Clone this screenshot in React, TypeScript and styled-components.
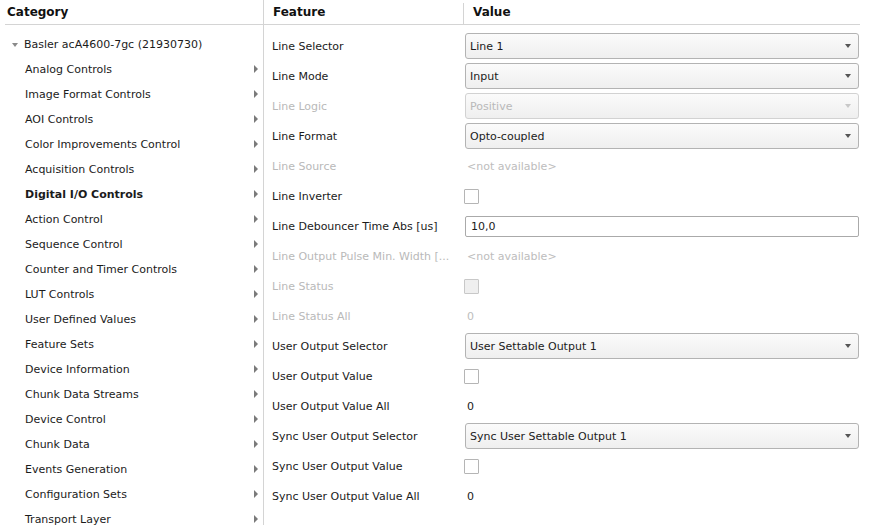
import React from 'react';
import styled, { createGlobalStyle } from 'styled-components';

const GlobalStyle = createGlobalStyle`
  html, body {
    margin: 0;
    padding: 0;
    background: #ffffff;
  }
  body {
    font-family: "DejaVu Sans", "Liberation Sans", sans-serif;
    font-size: 11px;
    color: #1b1b1b;
  }
`;

const Screen = styled.div`
  display: flex;
  width: 870px;
  height: 525px;
  overflow: hidden;
  background: #ffffff;
`;

const CategoryPanel = styled.div`
  width: 258px;
  margin-left: 5px;
  border-right: 1px solid #d4d4d4;
  display: flex;
  flex-direction: column;
  flex-shrink: 0;
`;

const HeaderRow = styled.div`
  height: 24px;
  flex-shrink: 0;
  display: flex;
  align-items: center;
  border-bottom: 1px solid #d4d4d4;
  font-weight: bold;
  font-size: 12px;
  color: #111;
`;

// header cell; the one with a divider starts 3px below the top, as in Qt
const HeaderCell = styled.div<{ $width?: number; $divider?: boolean }>`
  display: flex;
  align-items: center;
  align-self: flex-end;
  box-sizing: border-box;
  height: ${p => (p.$divider ? 21 : 24)}px;
  padding-bottom: ${p => (p.$divider ? 3 : 0)}px;
  padding-left: ${p => (p.$divider ? 9 : 9)}px;
  width: ${p => (p.$width ? `${p.$width}px` : 'auto')};
  flex: ${p => (p.$width ? '0 0 auto' : '1')};
  border-right: ${p => (p.$divider ? '1px solid #d4d4d4' : 'none')};
`;

const CategoryTitle = styled.div`
  padding-left: 2px;
  margin-top: -1px;
`;

const TreeList = styled.div`
  padding-top: 7px;
  display: flex;
  flex-direction: column;
`;

const TreeRow = styled.div<{ $bold?: boolean; $root?: boolean }>`
  height: 25px;
  flex-shrink: 0;
  display: flex;
  align-items: center;
  padding-left: ${p => (p.$root ? 7 : 20)}px;
  padding-right: 5px;
  font-weight: ${p => (p.$bold ? 'bold' : 'normal')};
  color: #1b1b1b;
  white-space: nowrap;
`;

const TreeLabel = styled.span`
  flex: 1;
`;

const Expander = styled.span`
  width: 0;
  height: 0;
  border-left: 3.5px solid transparent;
  border-right: 3.5px solid transparent;
  border-top: 4px solid #8a8a8a;
  margin-right: 6px;
  margin-top: 1px;
`;

const ChildArrow = styled.span`
  width: 0;
  height: 0;
  border-top: 4px solid transparent;
  border-bottom: 4px solid transparent;
  border-left: 4px solid #7a7a7a;
  margin-top: -2px;
`;

const FeaturePanel = styled.div`
  flex: 1;
  display: flex;
  flex-direction: column;
  padding-right: 10px;
`;

const Table = styled.div`
  padding-top: 6px;
  display: flex;
  flex-direction: column;
`;

const FeatureRow = styled.div`
  height: 30px;
  flex-shrink: 0;
  display: flex;
  align-items: center;
`;

const FeatureName = styled.div<{ $disabled?: boolean }>`
  width: 201px;
  padding-left: 8px;
  box-sizing: border-box;
  flex-shrink: 0;
  white-space: nowrap;
  color: ${p => (p.$disabled ? '#b9b9b9' : '#1b1b1b')};
`;

const ValueCell = styled.div`
  flex: 1;
  display: flex;
  align-items: center;
  padding-right: 1px;
`;

const Combo = styled.div<{ $disabled?: boolean }>`
  flex: 1;
  height: 26px;
  box-sizing: border-box;
  border: 1px solid ${p => (p.$disabled ? '#d2d2d2' : '#b3b3b3')};
  border-radius: 3px;
  background: linear-gradient(#fbfbfb, #efefef);
  display: flex;
  align-items: center;
  padding: 0 7px 0 4px;
  color: ${p => (p.$disabled ? '#b9b9b9' : '#1b1b1b')};
`;

const ComboText = styled.span`
  flex: 1;
`;

const ComboArrow = styled.span<{ $disabled?: boolean }>`
  width: 0;
  height: 0;
  border-left: 3.5px solid transparent;
  border-right: 3.5px solid transparent;
  border-top: 4px solid ${p => (p.$disabled ? '#c8c8c8' : '#555555')};
`;

const TextInput = styled.div`
  flex: 1;
  height: 21px;
  box-sizing: border-box;
  border: 1px solid #aaaaaa;
  border-radius: 2px;
  background: #ffffff;
  display: flex;
  align-items: center;
  padding-left: 5px;
  color: #1b1b1b;
`;

const Check = styled.div<{ $disabled?: boolean }>`
  width: 13px;
  height: 13px;
  border: 1px solid ${p => (p.$disabled ? '#c8c8c8' : '#b5b5b5')};
  background: ${p => (p.$disabled ? '#efefef' : '#ffffff')};
  border-radius: 1px;
  margin-left: -1px;
`;

const PlainValue = styled.span<{ $disabled?: boolean }>`
  padding-left: 2px;
  color: ${p => (p.$disabled ? '#bdbdbd' : '#1b1b1b')};
`;

type Feature =
  | { name: string; kind: 'combo'; value: string; disabled?: boolean }
  | { name: string; kind: 'text'; value: string; disabled?: boolean }
  | { name: string; kind: 'check'; disabled?: boolean }
  | { name: string; kind: 'plain'; value: string; disabled?: boolean };

const categories = [
  'Analog Controls',
  'Image Format Controls',
  'AOI Controls',
  'Color Improvements Control',
  'Acquisition Controls',
  'Digital I/O Controls',
  'Action Control',
  'Sequence Control',
  'Counter and Timer Controls',
  'LUT Controls',
  'User Defined Values',
  'Feature Sets',
  'Device Information',
  'Chunk Data Streams',
  'Device Control',
  'Chunk Data',
  'Events Generation',
  'Configuration Sets',
  'Transport Layer',
];

const features: Feature[] = [
  { name: 'Line Selector', kind: 'combo', value: 'Line 1' },
  { name: 'Line Mode', kind: 'combo', value: 'Input' },
  { name: 'Line Logic', kind: 'combo', value: 'Positive', disabled: true },
  { name: 'Line Format', kind: 'combo', value: 'Opto-coupled' },
  { name: 'Line Source', kind: 'plain', value: '<not available>', disabled: true },
  { name: 'Line Inverter', kind: 'check' },
  { name: 'Line Debouncer Time Abs [us]', kind: 'text', value: '10,0' },
  { name: 'Line Output Pulse Min. Width [...', kind: 'plain', value: '<not available>', disabled: true },
  { name: 'Line Status', kind: 'check', disabled: true },
  { name: 'Line Status All', kind: 'plain', value: '0', disabled: true },
  { name: 'User Output Selector', kind: 'combo', value: 'User Settable Output 1' },
  { name: 'User Output Value', kind: 'check' },
  { name: 'User Output Value All', kind: 'plain', value: '0' },
  { name: 'Sync User Output Selector', kind: 'combo', value: 'Sync User Settable Output 1' },
  { name: 'Sync User Output Value', kind: 'check' },
  { name: 'Sync User Output Value All', kind: 'plain', value: '0' },
];

const renderValue = (f: Feature) => {
  switch (f.kind) {
    case 'combo':
      return (
        <Combo $disabled={f.disabled}>
          <ComboText>{f.value}</ComboText>
          <ComboArrow $disabled={f.disabled} />
        </Combo>
      );
    case 'text':
      return <TextInput>{f.value}</TextInput>;
    case 'check':
      return <Check $disabled={f.disabled} />;
    default:
      return <PlainValue $disabled={f.disabled}>{f.value}</PlainValue>;
  }
};

export default function App() {
  return (
    <>
      <GlobalStyle />
      <Screen>
        <CategoryPanel>
          <HeaderRow>
            <CategoryTitle>Category</CategoryTitle>
          </HeaderRow>
          <TreeList>
            <TreeRow $root>
              <Expander />
              <TreeLabel>Basler acA4600-7gc (21930730)</TreeLabel>
            </TreeRow>
            {categories.map(c => (
              <TreeRow key={c} $bold={c === 'Digital I/O Controls'}>
                <TreeLabel>{c}</TreeLabel>
                <ChildArrow />
              </TreeRow>
            ))}
          </TreeList>
        </CategoryPanel>
        <FeaturePanel>
          <HeaderRow>
            <HeaderCell $width={200} $divider>Feature</HeaderCell>
            <HeaderCell>Value</HeaderCell>
          </HeaderRow>
          <Table>
            {features.map(f => (
              <FeatureRow key={f.name}>
                <FeatureName $disabled={f.disabled}>{f.name}</FeatureName>
                <ValueCell>{renderValue(f)}</ValueCell>
              </FeatureRow>
            ))}
          </Table>
        </FeaturePanel>
      </Screen>
    </>
  );
}
